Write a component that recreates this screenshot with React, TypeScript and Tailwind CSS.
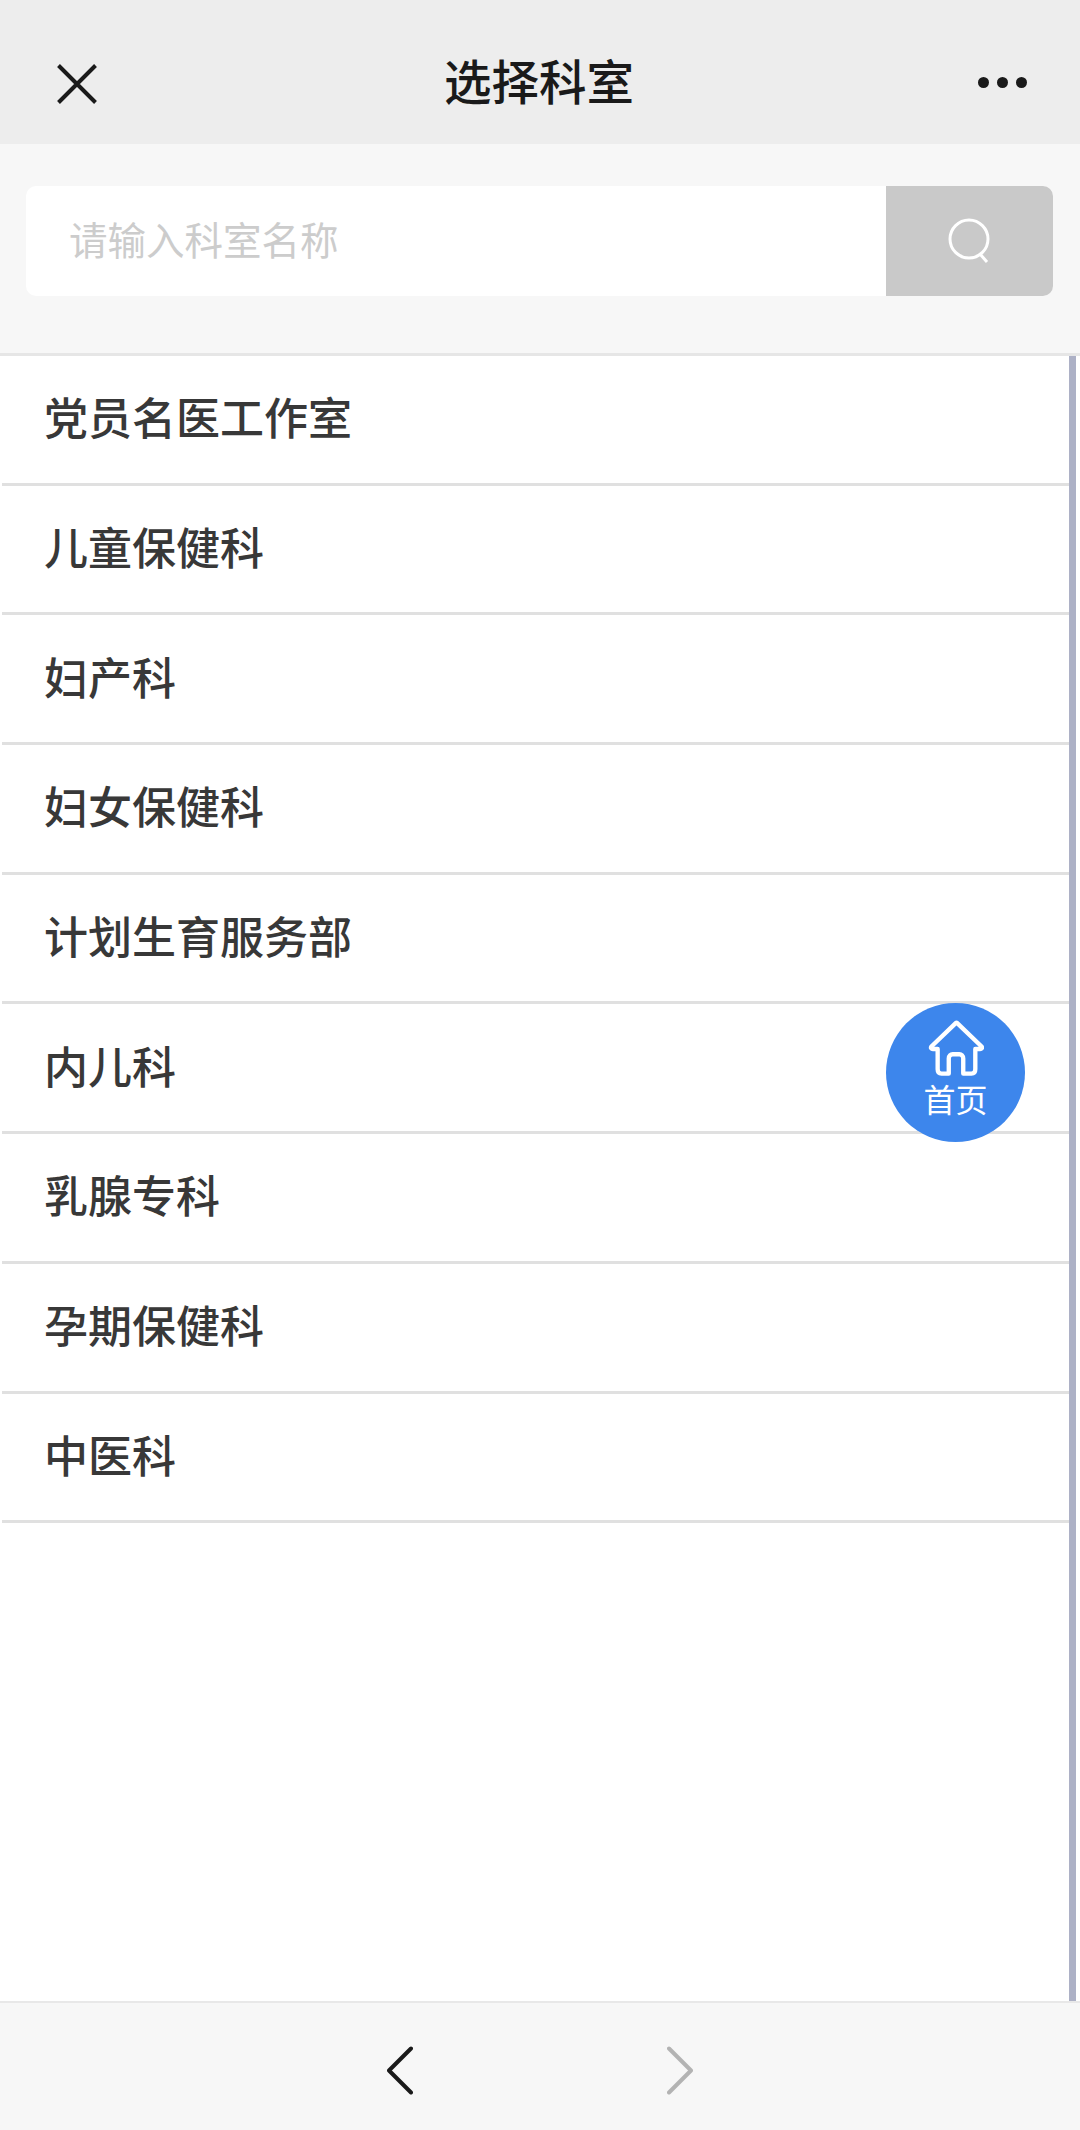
const departments = [
  "党员名医工作室",
  "儿童保健科",
  "妇产科",
  "妇女保健科",
  "计划生育服务部",
  "内儿科",
  "乳腺专科",
  "孕期保健科",
  "中医科",
];

export default function App() {
  return (
    <div className="flex h-[2130px] w-[1080px] flex-col overflow-hidden bg-[#f7f7f7] font-['Noto_Sans_CJK_SC','Liberation_Sans',sans-serif]">
      {/* top bar */}
      <header className="flex h-[144px] shrink-0 items-center justify-between bg-[#ededed] pt-[24px] pl-[57px] pr-[52px]">
        <svg width="40" height="40" viewBox="0 0 40 40" fill="none" stroke="#1a1a1a" strokeWidth="4">
          <path d="M1.500 1.500 38.500 38.500M38.500 1.500 1.500 38.500" />
        </svg>
        <h1 className="mb-[9px] ml-[3px] text-[47.500px] leading-none font-medium text-[#1a1a1a]">选择科室</h1>
        <div className="mb-[3px] mr-[1px] flex gap-[8px]">
          <span className="h-[11px] w-[11px] rounded-full bg-[#1a1a1a]" />
          <span className="h-[11px] w-[11px] rounded-full bg-[#1a1a1a]" />
          <span className="h-[11px] w-[11px] rounded-full bg-[#1a1a1a]" />
        </div>
      </header>

      {/* search */}
      <div className="shrink-0 px-[26px] pt-[42px] pb-[57px]">
        <div className="flex h-[110px] w-[1027px] overflow-hidden rounded-[10px] bg-white">
          <div className="flex flex-1 items-center pb-[4px] pl-[43px] text-[38.500px] text-[#cccccc]">请输入科室名称</div>
          <div className="flex w-[167px] items-center justify-center bg-[#c9c9c9]">
            <svg width="44" height="46" viewBox="0 0 44 46" fill="none" stroke="#ffffff" strokeWidth="3">
              <circle cx="21" cy="21" r="19" />
              <path d="M32 36l7 8" />
            </svg>
          </div>
        </div>
      </div>

      {/* list */}
      <div className="relative flex-1 border-t-[3px] border-[#e6e6e6] bg-white pl-[2px]">
        <ul className="w-[1067px]">
          {departments.map((name) => (
            <li
              key={name}
              className="flex h-[129.700px] items-center border-b-[3px] border-[#e0e0e0] pb-[6px] pl-[42px] text-[44px] font-medium text-[#383838]"
            >
              {name}
            </li>
          ))}
        </ul>
        <div className="absolute top-0 bottom-0 left-[1069px] w-[7px] bg-[#adb1c6]" />
        <div className="absolute top-[647px] left-[886px] flex h-[139px] w-[139px] flex-col items-center rounded-full bg-[#3d86ec] pt-[17px] text-white">
          <svg width="56" height="56" viewBox="0 0 58 58" fill="none" stroke="#ffffff" strokeWidth="4.500" strokeLinejoin="round" strokeLinecap="round">
            <path d="M29 3 3.500 27.500c-1 1.500 0 2.500 1.500 2.500h5v21c0 3 1.500 4.500 4 4.500h7.500V40c0-3 2-4.500 4-4.500h7c2 0 4 1.500 4 4.500v15.500H45c2.500 0 4-1.500 4-4.500V30h5c1.500 0 2.500-1 1.500-2.500L30 3c-.3-.3-.7-.3-1 0z" />
          </svg>
          <span className="mt-[3px] text-[32px] leading-[38px]">首页</span>
        </div>
      </div>

      {/* bottom nav */}
      <footer className="flex h-[129px] shrink-0 items-center border-t-2 border-[#e8e8e8] bg-[#f7f7f7] pt-[8px]">
        <div className="flex w-full justify-center gap-[254px]">
          <svg width="26" height="49" viewBox="0 0 26 49" fill="none" stroke="#1a1a1a" strokeWidth="4" strokeLinecap="round" strokeLinejoin="round">
            <path d="M24 2.500 2 24.500l22 22" />
          </svg>
          <svg width="26" height="49" viewBox="0 0 26 49" fill="none" stroke="#b3b3b3" strokeWidth="4" strokeLinecap="round" strokeLinejoin="round">
            <path d="M2 2.500l22 22-22 22" />
          </svg>
        </div>
      </footer>
    </div>
  );
}
